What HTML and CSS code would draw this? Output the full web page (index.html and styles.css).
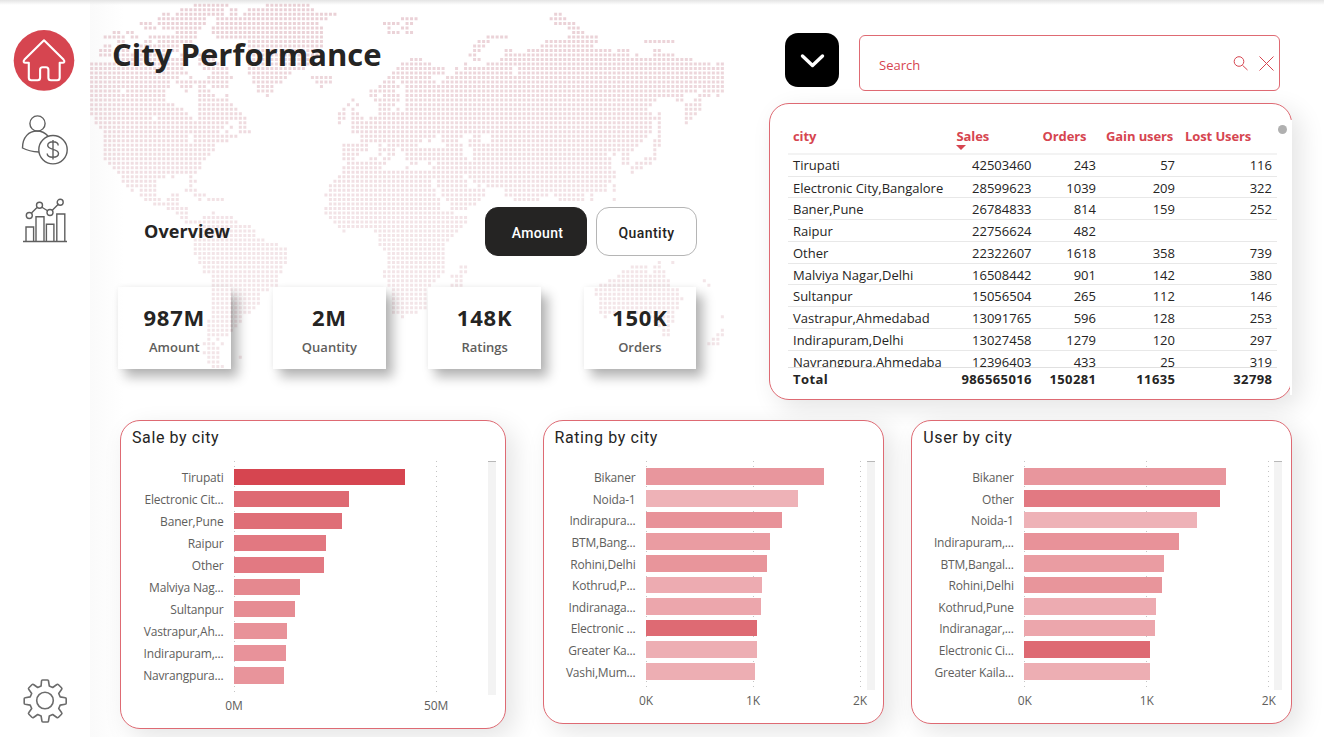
FILE: index.html
```html
<!DOCTYPE html>
<html lang="en">
<head>
<meta charset="utf-8">
<title>City Performance</title>
<link rel="stylesheet" href="styles.css">
</head>
<body>
<div class="app">
  <nav class="sidebar">
    <svg class="nav-home" width="62" height="62" viewBox="0 0 62 62" fill="none">
      <circle cx="31" cy="31.400" r="30.3" fill="#d64550"/>
      <path d="M31 11.300 11.500 30.600c-1.600 1.800-.8 3.200 1 3.200h3.300v15q0 2.500 2.500 2.500h6.300q2.500 0 2.500-2.500V40.800q0-2.500 2.500-2.500h3.300q2.500 0 2.500 2.500v8q0 2.500 2.500 2.500h6.300q2.500 0 2.500-2.500v-15h2.800c1.800 0 2.600-1.400 1-3.200Z" stroke="#fff" stroke-width="2.1" stroke-linejoin="round"/>
    </svg>
    <svg class="nav-users" width="48" height="52" viewBox="0 0 48 52" fill="none" stroke="#5f5f5f" stroke-width="1.4">
      <circle cx="16.500" cy="9.500" r="7.600"/>
      <path d="M18 38Q8 37.500 1.500 34C1.500 23 8 17 16 17q6.500 0 11 5"/>
      <circle cx="32" cy="35.700" r="14.200"/>
      <path d="M37.200 31.500c0-5-10.500-5-10.500-.3 0 5.200 10.800 3 10.800 8.300 0 5-11.300 5-11.300 0M32 26v19.500"/>
    </svg>
    <svg class="nav-stats" width="46" height="46" viewBox="0 0 46 46" fill="none" stroke="#5f5f5f" stroke-width="1.400">
      <path d="M1 43.500h44M4 43V29h7.600v14M14 43V18.800h8V43M24.400 43V26.300h7.500V43M34.800 43V16h8v27M9.500 15l5.500-5.500M19.500 9l6.500 4M30.300 12.300l6.500-6.500"/>
      <circle cx="7.300" cy="17.500" r="3"/><circle cx="17.500" cy="7.200" r="3"/><circle cx="28" cy="14.500" r="3"/><circle cx="38.200" cy="4.300" r="3"/>
    </svg>
    <svg class="nav-gear" width="44" height="44" viewBox="0 0 44 44" fill="none" stroke="#6c6c6c" stroke-width="1.6" stroke-linejoin="round">
      <path d="M18.500 2q0-1 1-1h5q1 0 1 1l.8 5 3.400 1.500 4.200-3q.8-.6 1.600.2l3 3q.8.8.2 1.600l-3 4.200 1.500 3.400 5 .8q1 .2 1 1v4.600q0 1-1 1l-5 .8-1.500 3.400 3 4.200q.6.800-.2 1.600l-3 3q-.8.800-1.600.2l-4.200-3-3.400 1.500-.8 5q-.2 1-1 1h-4.600q-1 0-1-1l-.8-5-3.400-1.500-4.200 3q-.8.600-1.600-.2l-3-3q-.8-.8-.2-1.600l3-4.200-1.500-3.400-5-.8q-1-.2-1-1v-4.600q0-1 1-1l5-.8 1.500-3.400-3-4.200q-.6-.8.2-1.600l3-3q.8-.8 1.600-.2l4.200 3 3.400-1.500Z"/>
      <circle cx="22" cy="21.500" r="8.300"/>
    </svg>
  </nav>

  <main class="main">
    <svg class="world" viewBox="0 0 1920 1104" aria-hidden="true"></svg>

    <div class="upper">
      <section class="summary">
        <h1 class="page-title">City Performance</h1>
        <div class="overview-bar">
          <h2 class="overview-title">Overview</h2>
          <button class="toggle toggle-on">Amount</button>
          <button class="toggle">Quantity</button>
        </div>
        <div class="cards">
          <div class="card"><b class="card-value">987M</b><span class="card-label">Amount</span></div>
          <div class="card card-solid"><b class="card-value">2M</b><span class="card-label">Quantity</span></div>
          <div class="card card-solid"><b class="card-value">148K</b><span class="card-label">Ratings</span></div>
          <div class="card"><b class="card-value">150K</b><span class="card-label">Orders</span></div>
        </div>
      </section>

      <section class="details">
        <div class="tools">
          <button class="expand">
            <svg width="26" height="18" viewBox="0 0 26 18" fill="none" stroke="#fff" stroke-width="3.400" stroke-linecap="round" stroke-linejoin="round"><path d="M3.500 5 13.500 14.500 23.500 5"/></svg>
          </button>
          <div class="search">
            <span class="search-text">Search</span>
            <svg class="search-icon" width="16" height="16" viewBox="0 0 16 16" fill="none" stroke="#d64550" stroke-width="1"><circle cx="7" cy="6.500" r="4.800"/><path d="M10.500 10.300l5 4.700"/></svg>
            <svg class="search-icon" width="16" height="16" viewBox="0 0 16 16" fill="none" stroke="#d64550" stroke-width="1"><path d="M1.500 1.500l14 14M15.500 1.500l-14 14"/></svg>
          </div>
        </div>
        <div class="panel table-panel">
          <div class="table-row table-head"><span>city</span><span class="sorted">Sales</span><span>Orders</span><span>Gain users</span><span>Lost Users</span></div>
          <div class="table-body"></div>
          <div class="table-row table-total"><span>Total</span><span>986565016</span><span>150281</span><span>11635</span><span>32798</span></div>
          <i class="scroll-dot"></i>
        </div>
      </section>
    </div>

    <div class="charts">
      <section class="panel chart chart-sale"></section>
      <section class="panel chart chart-rating"></section>
      <section class="panel chart chart-user"></section>
    </div>
  </main>
  <div class="top-shade"></div>
</div>
<script src="app.js"></script>
</body>
</html>
```
FILE: styles.css
```css
* { box-sizing: border-box; }
body { margin: 0; background: #fff; color: #252423; font-family: "Open Sans", "Noto Sans", sans-serif; overflow: hidden; }
h1, h2, h3 { margin: 0; }
button { font: inherit; padding: 0; }
svg { display: block; flex: none; }

.app { position: relative; display: flex; width: 1324px; height: 737px; }
.top-shade { position: absolute; left: 0; top: 0; width: 100%; height: 5px; background: linear-gradient(#e4e4e4, rgba(255,255,255,0)); }

.sidebar { width: 90px; display: flex; flex-direction: column; padding: 29px 0 14px 13px; background: #fff; }
.nav-users { margin: 23px 0 0 8px; }
.nav-stats { margin: 32px 0 0 9px; }
.nav-gear { margin: auto 0 0 9.5px; }

.main { position: relative; width: 1234px; background: linear-gradient(90deg, #fafafa, #fff 34px); }
.world { position: absolute; left: 0; top: 0; width: 640px; height: 368px; }

.upper { position: relative; display: flex; height: 420px; }
.summary { width: 679px; }
.page-title { padding: 31px 0 0 22px; height: 207px; font-size: 31px; line-height: 46px; font-weight: 700; letter-spacing: 0.02px; white-space: nowrap; }
.overview-bar { display: flex; padding-left: 54px; height: 80px; }
.overview-title { width: 341px; font-size: 18px; line-height: 49px; font-weight: 700; letter-spacing: 0.1px; }
.toggle { width: 101px; height: 49px; border: 1px solid #b5b5b5; border-radius: 13px; background: #fff; color: #252423; font-family: Roboto, sans-serif; font-size: 14px; font-weight: 500; letter-spacing: 0.45px; line-height: 51px; }
.toggle-on { width: 102px; margin-right: 9px; padding-left: 3px; background: #252423; border-color: #252423; color: #fff; letter-spacing: 0.35px; }

.cards { display: flex; gap: 42.7px; padding-left: 28px; }
.card { width: 112.500px; height: 82px; display: flex; flex-direction: column; align-items: center; box-shadow: 7px 8px 11px rgba(0,0,0,.29), 0 0 6px rgba(0,0,0,.05); }
.card-solid { background: #fff; }
.card-value { margin-top: 15px; font-size: 22px; line-height: 30px; letter-spacing: 0.8px; }
.card-label { margin-top: 5px; font-size: 13px; line-height: 20px; font-weight: 600; color: #605e5c; }

.details { width: 555px; }
.tools { display: flex; height: 103px; padding: 33px 0 0 16px; }
.expand { display: flex; align-items: center; justify-content: center; width: 54px; height: 54px; border: 0; border-radius: 13px; background: #000; }
.search { display: flex; align-items: center; gap: 10px; width: 421px; height: 56px; margin: 2px 0 0 20px; padding: 0 5px 0 19px; border: 1px solid #df6a73; border-radius: 6px; background: #fff; }
.search-text { flex: 1; padding-top: 4px; font-size: 13px; color: #d64550; }

.panel { position: relative; background: #fff; border: 1px solid #de6a73; border-radius: 20px; box-shadow: 8px 8px 26px rgba(0,0,0,.11); }
.table-panel { width: 523px; height: 297px; padding: 19px 14px 0 18px; font-size: 13px; }
.table-panel::after { content: ""; position: absolute; right: -1px; top: 16px; width: 2px; height: 275px; background: #fff; }
.table-row { display: grid; grid-template-columns: 162.500px 86px 64.500px 79px 97px; height: 21.750px; line-height: 22px; }
.table-row span { padding: 0 5px; text-align: right; border-bottom: 1px solid #e8e8e8; white-space: nowrap; overflow: hidden; }
.table-row span:first-child { text-align: left; }
.table-head { height: 32px; line-height: 27px; font-weight: 700; color: #d64550; }
.table-head span { text-align: left; border-bottom: 2px solid #f3f3f3; letter-spacing: -0.1px; }
.table-head span:nth-child(2), .table-head span:nth-child(3) { padding: 0 0 0 6px; }
.sorted { position: relative; }
.sorted::after { content: ""; position: absolute; left: 5px; top: 22px; border: 5px solid transparent; border-top-color: #d64550; border-bottom: 0; }
.table-body { height: 212.500px; overflow: hidden; border-bottom: 1px solid #e0e0e0; }
.table-body .table-row:first-child { height: 21.500px; line-height: 21px; }
.table-total { font-weight: 700; line-height: 23px; }
.table-total span { border: 0; padding-right: 4.600px; letter-spacing: 0.4px; }
.scroll-dot { position: absolute; right: 4.500px; top: 21px; width: 9px; height: 9px; border-radius: 50%; background: #b0b0b0; z-index: 1; }

.charts { position: relative; display: flex; padding-left: 30px; }
.chart { height: 304px; }
.chart-sale { width: 386px; height: 309px; margin-right: 36.5px; }
.chart-rating { width: 341px; margin-right: 27.8px; }
.chart-user { width: 381px; }
.chart-title { padding: 5px 0 0 11px; height: 40px; font-family: Roboto, sans-serif; font-size: 16px; line-height: 23px; font-weight: 400; letter-spacing: 0.6px; }
.chart-body { display: flex; }
.chart-labels { padding-top: 6px; text-align: right; font-size: 12px; letter-spacing: -0.18px; color: #605e5c; }
.chart-labels div { height: 21.650px; line-height: 21px; white-space: nowrap; }
.chart-sale .chart-labels div { height: 22.050px; line-height: 22px; }
.chart-labels { width: 92px; }
.chart-user .chart-labels { width: 101.500px; }
.chart-sale .chart-labels { width: 102.500px; }
.plot { position: relative; height: 229px; margin-left: 10px; padding-top: 7.300px; }
.chart-sale .plot { height: 234px; padding-top: 7.600px; }
.plot-sale { width: 202px; }
.plot-rating { width: 214px; }
.plot-user { width: 244px; }
.grid { position: absolute; inset: 0; display: flex; justify-content: space-between; margin-right: -1px; }
.grid i { width: 1px; background: repeating-linear-gradient(#c4c4c4 0 1px, transparent 1px 5px); }
.bar { position: relative; height: 16.650px; margin-bottom: 5px; }
.chart-sale .bar { margin-bottom: 5.400px; }
.track { width: 8px; margin-left: auto; border-top: 1px solid #b8b8b8; background: #f3f3f3; }
.chart-sale .track { margin-right: 9px; }
.chart-rating .track { margin-right: 8px; }
.chart-user .track { margin-right: 9px; }
.axis { display: flex; justify-content: space-between; font-size: 12px; line-height: 20px; letter-spacing: -0.15px; color: #605e5c; text-align: center; }
.axis span { width: 40px; }
.axis-sale { width: 242px; margin: 1px 0 0 93px; }
.axis-rating { width: 254px; margin: 1px 0 0 82.500px; }
.axis-user { width: 284px; margin: 1px 0 0 92.500px; }
```
FILE: app.js
```js
// World map dots. Each entry is "row:from-to,..." on a 13.5-unit lattice.
const west = `0:340-445,557-687|1:300-433,449-475,503-700|2:246-270,286-433,449-475,490-727,738-770|3:232-380,408-741,962-985|4:179-214,232-380,408-714,908-958,975-985|5:192-230,246-365,395-727,921-932,962-985|6:97-122,138-162,286-350,395-727,921-958,975-985|7:70-136,151-176,205-350,408-727|8:110-130,192-218,232-340,500-727|9:70-97,110-135,165-300,320-340,500-727|10:57-97,110-150,165-300,500-714|11:57-90,110-270,300-400,500-714|12:110-162,178-325,355-400,500-700|13:30-325,355-420,500-687,962-985|14:30-312,368-445,500-675,948-985|15:30-325,395-445,503-635,935-985|16:30-300,327-340,381-460,517-622,692-757,921-962,975-985|17:30-270,286-350,355-445,517-608,705-757,908-945,975-985|18:30-270,300-338,355-380,395-445,530-580,720-726,894-962,975-985|19:30-120,138-257,313-325,355-392,530-580,868-945,975-985|20:30-257,355-405,435-445,557-568,868-895,908-958,975-985|21:30-257,355-445,813-822,881-960,975-985|22:30-285,355-458,800-808,827-838,894-945|23:30-312,355-472,786-795,813-822,894-930,950-960|24:30-325,355-487,773-795,813-838,894-985|25:43-215,232-340,355-500,773-795,813-850,865-985|26:43-445,475-500,773-783,813-985|27:57-435,450-460,475-500,813-985|28:70-420,435-445,475-515,813-985|29:70-325,340-472,840-985|30:70-325,340-445,840-985|31:70-405,786-865,894-905,921-985|32:70-405,786-865,894-945,975-985|33:70-392,786-838,894-905,921-945|34:70-378,786-825,865-890,908-930,975-985|35:84-365,800-918|36:97-365,786-905,975-985|37:110-350,786-985|38:124-257,273-285,327-340,773-985|39:124-230,327-350,760-985|40:138-230,327-340,746-985|41:151-162,178-230,313-350,746-985|42:178-230,273-300,340-378,732-985|43:192-245,260-295,355-365,381-430,746-985`;
const east = `2:462-485|3:0-50,449-500|4:16-35,462-526|5:0-25,503-540|6:16-38,517-553|7:260-322,503-592|8:232-270,435-592,732-825|9:219-255,422-580|10:219-240,314-337,381-633,652-690,760-783|11:206-230,314-690,705-715,760-825|12:30-66,219-240,300-880|13:0-92,192-200,260-932,948-972|14:0-133,165-175,192-337,354-972|15:0-133,165-337,354-972|16:0-92,138-972|17:0-10,30-105,124-972|18:16-972|19:16-890,908-972|20:16-850,894-930,948-960|21:30-770,827-850,881-905|22:16-757,854-905|23:16-743,854-905|24:0-757,773-783,854-890|25:0-783,854-878|26:0-757,773-783,854-864|27:0-757,773-783|28:0-757,773-783|29:0-105,124-190,219-243,273-743,773-783|30:0-66,84-92,124-175,206-243,273-730,760-783|31:0-50,138-190,206-716,760-783|32:0-187,219-700,760-770|33:16-187,219-622,638-648,665-690,760-770|34:16-200,219-635,665-690,732-770|35:30-52,84-92,110-635,665-690,705-757|36:16-25,97-635,692-730|37:0-648,692-702|38:0-187,206-648|39:0-92,110-200,219-635|40:0-92,110-200,232-243,260-622,638-648|41:0-105,124-255,314-622,638-648|42:0-105,124-255,314-445,462-553,570-580|43:0-120,138-240,340-418,476-553,570-580,638-648|44:0-120,151-225|45:0-120,151-200|46:0-160|47:0-200|48:0-200|49:0-187|50:0-175|51:0-160|52:0-146|53:0-133|54:0-133|55:0-133|56:0-133|57:0-133,773-783,813-822|58:0-133,178-200,692-740,760-783|59:0-133,178-200,665-740,760-795|60:0-120,151-187,652-795|61:0-105,165-187,625-808,908-916|62:0-92,151-187,598-808,921-930|63:0-85,584-835|64:0-85,584-835|65:0-85,598-850|66:0-78,598-835|67:0-78,598-835|68:0-50,598-660,692-822|69:0-10,611-620,745-822,962-970|70:760-822|71:773-808|72:786-808,962-970|73:786-808,948-972|74:935-958|75:921-958`;
const south = `44:192-225,232-265,720-930|45:232-290,705-930|46:260-290,368-374,705-930|47:273-290,340-428,720-930|48:286-440,732-930|49:330-480,746-930|50:340-495,760-766,854-930|51:327-495,868-930|52:313-522,868-930|53:313-562,868-930|54:313-590,881-930|55:313-590,894-930|56:327-590,894-930|57:327-590,894-930|58:340-577,894-930|59:340-577,881-930|60:368-562,881-930|61:368-562,894-930|62:368-562,894-930|63:368-535,908-930|64:368-508,908-930|65:368-508,908-930|66:368-508,921-930|67:368-495,921-930|68:368-480,921-930|69:368-455,935-940|70:354-455|71:354-440|72:354-425|73:354-410|74:354-362,381-387|75:340-372,394-402|76:354-395|77:340-348,354-387|78:354-385,449-456|79:354-385|80:368-398`;
const dots = new Map();
function addRuns(text, offset) {
  text.split("|").forEach(line => {
    const [row, runs] = line.split(":");
    runs.split(",").forEach(run => {
      const [a, b] = run.split("-").map(Number);
      for (let c = Math.ceil((a + offset - 279) / 13.515); c * 13.515 + 275 <= b + offset + 1; c++)
        if (c >= 0) dots.set(row + "," + c, [+row, c]);
    });
  });
}
addRuns(west, 240);
addRuns(east, 1200);
addRuns(south, 270);
// Africa's interior spans the seam between the two coordinate frames.
for (let r = 44; r < 69; r++) for (let c = 67; c < 69; c++) dots.set(r + "," + c, [r, c]);
const rows = {};
dots.forEach(([r, c]) => {
  const x = (275 + c * 13.515 - 270 - 4.5).toFixed(1), y = (16 + r * 13.54 - 4.5).toFixed(1);
  rows[r] = (rows[r] || "") + `M${x} ${y}h9v9h-9z`;
});
document.querySelector(".world").innerHTML = Object.entries(rows).map(([r, d]) =>
  `<path d="${d}" fill="#cd8f9c" opacity="${(0.42 - Math.min(r, 50) * 0.0037).toFixed(3)}"/>`).join("");

const table = [
  ["Tirupati", 42503460, 243, 57, 116],
  ["Electronic City,Bangalore", 28599623, 1039, 209, 322],
  ["Baner,Pune", 26784833, 814, 159, 252],
  ["Raipur", 22756624, 482, "", ""],
  ["Other", 22322607, 1618, 358, 739],
  ["Malviya Nagar,Delhi", 16508442, 901, 142, 380],
  ["Sultanpur", 15056504, 265, 112, 146],
  ["Vastrapur,Ahmedabad", 13091765, 596, 128, 253],
  ["Indirapuram,Delhi", 13027458, 1279, 120, 297],
  ["Navrangpura,Ahmedaba", 12396403, 433, 25, 319]
];
document.querySelector(".table-body").innerHTML = table.map(r =>
  `<div class="table-row">${r.map(v => `<span>${v}</span>`).join("")}</div>`).join("");

const charts = {
  sale: { title: "Sale by city", ticks: ["0M", "50M"], bars: [
    ["Tirupati", 171.7, "#d64550"], ["Electronic Cit...", 115.7, "#de6a73"], ["Baner,Pune", 108.4, "#df6e77"],
    ["Raipur", 92.4, "#e27881"], ["Other", 90.4, "#e27982"], ["Malviya Nag...", 66.7, "#e5888f"],
    ["Sultanpur", 61, "#e68c93"], ["Vastrapur,Ah...", 53, "#e89299"], ["Indirapuram,...", 52.7, "#e8929a"], ["Navrangpura...", 50.4, "#e8949b"]] },
  rating: { title: "Rating by city", ticks: ["0K", "1K", "2K"], bars: [
    ["Bikaner", 178.3, "#e8969d"], ["Noida-1", 152.3, "#eeb2b7"], ["Indirapura...", 136.7, "#e89299"],
    ["BTM,Bang...", 124.3, "#ea9ca2"], ["Rohini,Delhi", 121.7, "#e8959b"], ["Kothrud,P...", 116.3, "#edabb1"],
    ["Indiranaga...", 115.3, "#eca6ac"], ["Electronic ...", 111.3, "#de6a73"], ["Greater Ka...", 111.3, "#edaeb3"], ["Vashi,Mum...", 109.3, "#edaeb3"]] },
  user: { title: "User by city", ticks: ["0K", "1K", "2K"], bars: [
    ["Bikaner", 202.3, "#e8969d"], ["Other", 196.3, "#e27982"], ["Noida-1", 173.3, "#eeb2b7"],
    ["Indirapuram,...", 155.3, "#e89299"], ["BTM,Bangal...", 140.3, "#ea9ca2"], ["Rohini,Delhi", 138.3, "#e8959b"],
    ["Kothrud,Pune", 132.3, "#edabb1"], ["Indiranagar,...", 131.3, "#eca6ac"], ["Electronic Ci...", 126.3, "#de6a73"], ["Greater Kaila...", 126.3, "#edaeb3"]] }
};
for (const [key, c] of Object.entries(charts)) {
  document.querySelector(".chart-" + key).innerHTML =
    `<h3 class="chart-title">${c.title}</h3><div class="chart-body">
      <div class="chart-labels">${c.bars.map(b => `<div>${b[0]}</div>`).join("")}</div>
      <div class="plot plot-${key}"><div class="grid">${c.ticks.map(() => "<i></i>").join("")}</div>
      ${c.bars.map(b => `<div class="bar" style="width:${b[1]}px;background:${b[2]}"></div>`).join("")}</div>
      <div class="track"></div></div>
    <div class="axis axis-${key}">${c.ticks.map(t => `<span>${t}</span>`).join("")}</div>`;
}
```
